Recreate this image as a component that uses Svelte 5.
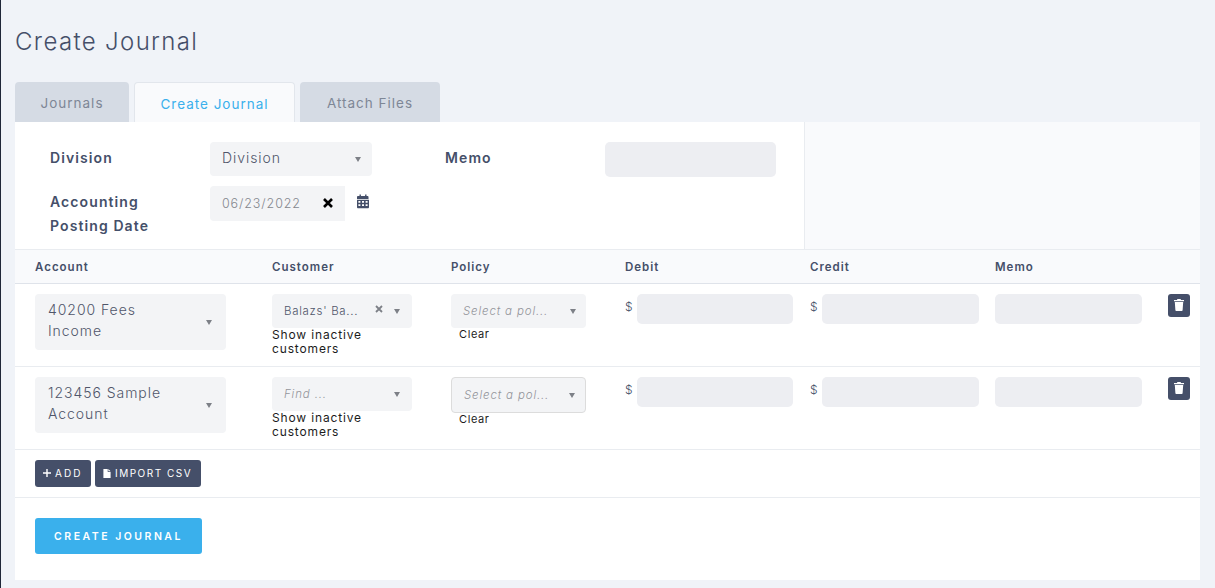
<script>
	const rows = [
		{ account: ['40200 Fees', 'Income'], customer: "Balazs' Ba...", focused: false },
		{ account: ['123456 Sample', 'Account'], customer: '', focused: true }
	];
	const columns = ['Account', 'Customer', 'Policy', 'Debit', 'Credit', 'Memo'];
</script>

<div class="page">
	<h1>Create Journal</h1>

	<nav class="tabs">
		<span class="tab journals">Journals</span>
		<span class="tab create active">Create Journal</span>
		<span class="tab attach">Attach Files</span>
	</nav>

	<section class="panel">
		<div class="top">
			<div class="top-form">
				<div class="field-grid">
					<span class="label">Division</span>
					<div class="select division">
						<span>Division</span>
						<i class="caret"></i>
					</div>
					<span class="label">Memo</span>
					<input class="input memo-top" type="text" />
					<span class="label date-label">Accounting<br />Posting Date</span>
					<div class="date-wrap">
						<div class="date">
							<span>06/23/2022</span>
							<svg class="x" viewBox="0 0 12 12" aria-hidden="true">
								<path d="M2 2 10 10M10 2 2 10" stroke="#000" stroke-width="2.6" fill="none" />
							</svg>
						</div>
						<svg class="calendar" viewBox="0 0 12 14" aria-hidden="true">
							<path fill="#454f69" fill-rule="evenodd" d="M2.5 0h1.4v1.6h4.2V0h1.4v1.6h1.2c.5 0 .8.4.8.8v2H0v-2c0-.4.3-.8.8-.8h1.7zM0 5.2h12v7.6c0 .5-.4.9-.8.9H.8c-.4 0-.8-.4-.8-.9zM1.4 6.600v1.600h2V6.600zm3.600 0v1.600h2V6.600zm3.600 0v1.600h2V6.600zM1.400 9.800v1.800h2V9.800zm3.600 0v1.800h2V9.800zm3.600 0v1.800h2V9.800z" />
						</svg>
					</div>
				</div>
			</div>
			<div class="top-side"></div>
		</div>

		<div class="grid head">
			{#each columns as col}
				<span>{col}</span>
			{/each}
		</div>

		{#each rows as row}
			<div class="grid row">
				<div class="select account">
					<span>{row.account[0]}<br />{row.account[1]}</span>
					<i class="caret"></i>
				</div>
				<div>
					<div class="select small customer">
						{#if row.customer}
							<span class="value">{row.customer}</span>
							<svg class="clear-x" viewBox="0 0 8 8" aria-hidden="true">
								<path d="M1 1 7 7M7 1 1 7" stroke="#7d8087" stroke-width="1.8" fill="none" />
							</svg>
						{:else}
							<span class="placeholder">Find ...</span>
						{/if}
						<i class="caret"></i>
					</div>
					<div class="note">Show inactive<br />customers</div>
				</div>
				<div>
					<div class="select small policy" class:focused={row.focused}>
						<span class="placeholder">Select a pol...</span>
						<i class="caret"></i>
					</div>
					<div class="note clear">Clear</div>
				</div>
				<div class="money">
					<span>$</span>
					<input class="input" type="text" />
				</div>
				<div class="money">
					<span>$</span>
					<input class="input" type="text" />
				</div>
				<div class="line-memo">
					<input class="input" type="text" />
				</div>
				<button class="trash" aria-label="Delete">
					<svg viewBox="0 0 10 12" aria-hidden="true">
						<path fill="#fff" d="M3.400 0h3.200l.4 1H10v1.200H0V1h3zM.8 3h8.400l-.6 8.200c0 .5-.4.800-.8.800H2.200c-.4 0-.8-.3-.8-.8z" />
					</svg>
				</button>
			</div>
		{/each}

		<div class="actions">
			<button class="btn-dark">
				<svg viewBox="0 0 8 8" aria-hidden="true">
					<path d="M4 0v8M0 4h8" stroke="#fff" stroke-width="1.400" fill="none" />
				</svg>
				ADD
			</button>
			<button class="btn-dark import">
				<svg class="file" viewBox="0 0 8 10" aria-hidden="true">
					<path fill="#fff" d="M0 0h4.800v3.200H8V10H0zM5.500 0 8 2.500H5.500z" />
				</svg>
				IMPORT CSV
			</button>
		</div>

		<div class="submit">
			<button class="btn-primary">CREATE JOURNAL</button>
		</div>
	</section>
</div>

<style>
	:global(body) {
		margin: 0;
		background: #f0f3f8;
	}

	.page {
		box-sizing: border-box;
		height: 588px;
		overflow: hidden;
		padding: 0 15px 0 14px;
		border-left: 1px solid #1f2738;
		font-family: Inter, "Open Sans", sans-serif;
		color: #454f69;
	}

	h1 {
		margin: 0;
		padding-top: 27px;
		height: 82px;
		box-sizing: border-box;
		font-size: 24px;
		line-height: 30px;
		font-weight: 300;
		letter-spacing: 1.35px;
		color: #454f69;
	}

	.tabs {
		display: flex;
		gap: 5px;
		height: 40px;
	}

	.tab {
		display: flex;
		align-items: center;
		justify-content: center;
		box-sizing: border-box;
		padding-top: 2px;
		border-radius: 4px 4px 0 0;
		background: #d5dbe4;
		color: #7e8796;
		font-size: 13.500px;
		letter-spacing: 1px;
	}

	.journals {
		width: 114px;
	}

	.create {
		width: 161px;
	}

	.attach {
		width: 140px;
	}

	.tab.active {
		background: #f9fafc;
		color: #3ab0ec;
		border: 1px solid #e2e6ec;
		border-bottom: none;
	}

	.panel {
		background: #fff;
		height: 458px;
		width: 1185px;
	}

	.top {
		display: flex;
		height: 127px;
		border-bottom: 1px solid #e9ecf0;
		box-sizing: content-box;
	}

	.top-form {
		width: 789px;
		box-sizing: border-box;
		padding: 20px 0 0 35px;
	}

	.top-side {
		flex: 1;
		background: #f9fafc;
		border-left: 1px solid #e9ecf0;
	}

	.field-grid {
		display: grid;
		grid-template-columns: 160px 235px 160px 171px;
		grid-template-rows: 35px auto;
		row-gap: 9px;
	}

	.label {
		font-size: 14px;
		font-weight: 600;
		letter-spacing: 1.1px;
		line-height: 24px;
		padding-top: 4px;
	}

	.date-label {
		grid-column: 1;
	}

	.select {
		display: flex;
		align-items: center;
		justify-content: space-between;
		box-sizing: border-box;
		background: #f3f4f6;
		border-radius: 4px;
		color: #50566a;
		font-size: 14px;
		font-weight: 300;
		letter-spacing: 0.95px;
	}

	.caret {
		flex: none;
		width: 0;
		height: 0;
		border-left: 3px solid transparent;
		border-right: 3px solid transparent;
		border-top: 5px solid #7d8087;
	}

	.division {
		width: 162px;
		height: 34px;
		padding: 0 11px 3px 12px;
	}

	.division .caret {
		margin-top: 3px;
	}

	.input {
		display: block;
		box-sizing: border-box;
		border: none;
		outline: none;
		border-radius: 5px;
		background: #edeef2;
		width: 100%;
		height: 30px;
		padding: 0;
		margin: 0;
	}

	.input.memo-top {
		height: 35px;
		width: 171px;
	}

	.date-wrap {
		display: flex;
		gap: 12px;
		align-items: flex-start;
	}

	.date {
		display: flex;
		align-items: center;
		justify-content: space-between;
		box-sizing: border-box;
		width: 135px;
		height: 35px;
		padding: 0 11px 1px 12px;
		background: #f3f4f6;
		border-radius: 4px 0 0 4px;
		color: #84878e;
		font-size: 12.500px;
		font-weight: 300;
		letter-spacing: 0.9px;
	}

	.x {
		width: 12px;
		height: 12px;
	}

	.calendar {
		width: 12px;
		height: 15px;
		margin-top: 8px;
	}

	.grid {
		display: grid;
		grid-template-columns: 237px 179px 174px 185px 185px 173px 22px;
		padding-left: 20px;
	}

	.head {
		height: 33px;
		align-items: center;
		background: #f9fafc;
		border-bottom: 1px solid #dfe3ea;
		font-size: 11.500px;
		font-weight: 600;
		letter-spacing: 1px;
	}

	.row {
		box-sizing: border-box;
		height: 83px;
		padding-top: 10px;
		border-bottom: 1px solid #e9ecf0;
		align-items: start;
	}

	.account {
		width: 191px;
		height: 56px;
		padding: 0 14px 4px 13px;
		line-height: 21px;
	}

	.account .caret {
		margin-top: 4px;
	}

	.small {
		height: 34px;
		font-size: 11.500px;
	}

	.customer {
		width: 140px;
		padding: 0 12px 0 12px;
	}

	.customer .value {
		flex: 1;
		letter-spacing: 0.7px;
	}

	.clear-x {
		width: 8px;
		height: 8px;
		margin: -4px 11px 0 0;
	}

	.policy {
		width: 135px;
		padding: 0 10px 0 12px;
	}

	.policy.focused {
		height: 36px;
		border: 1px solid #dcdcdc;
	}

	.placeholder {
		font-style: italic;
		font-weight: 300;
		color: #93959b;
		letter-spacing: 0.85px;
	}

	.note {
		color: #1c1c1c;
		font-size: 12px;
		line-height: 14px;
		letter-spacing: 0.85px;
	}

	.clear {
		padding-left: 8px;
		margin-top: -1px;
		font-size: 11px;
		letter-spacing: 0.6px;
	}

	.money {
		display: grid;
		grid-template-columns: 12px 156px;
		font-size: 12px;
		font-weight: 300;
		color: #454f69;
		line-height: 26px;
	}

	.money + .money {
		grid-template-columns: 12px 157px;
	}

	.line-memo {
		width: 147px;
	}

	.trash {
		display: flex;
		align-items: center;
		justify-content: center;
		width: 22px;
		height: 23px;
		padding: 0 0 2px;
		border: none;
		border-radius: 3px;
		background: #454f69;
	}

	.trash svg {
		width: 10px;
		height: 12px;
	}

	.actions {
		display: flex;
		gap: 4px;
		box-sizing: border-box;
		height: 48px;
		padding: 10px 0 0 20px;
		border-bottom: 1px solid #e9ecf0;
	}

	.btn-dark {
		display: flex;
		align-items: center;
		gap: 4px;
		height: 27px;
		width: 56px;
		padding: 0 0 1px 8px;
		border: none;
		border-radius: 3px;
		background: #454f69;
		color: #fff;
		font-family: inherit;
		font-size: 10px;
		font-weight: 400;
		letter-spacing: 2.100px;
	}

	.btn-dark svg {
		width: 8px;
		height: 8px;
	}

	.btn-dark .file {
		height: 9px;
	}

	.import {
		width: 106px;
		letter-spacing: 1.500px;
	}

	.submit {
		padding: 20px 0 0 20px;
	}

	.btn-primary {
		display: block;
		width: 167px;
		height: 36px;
		padding: 0;
		border: none;
		border-radius: 3px;
		background: #3ab0ec;
		color: #fff;
		font-family: inherit;
		font-size: 10.500px;
		font-weight: 600;
		letter-spacing: 2.500px;
	}
</style>
